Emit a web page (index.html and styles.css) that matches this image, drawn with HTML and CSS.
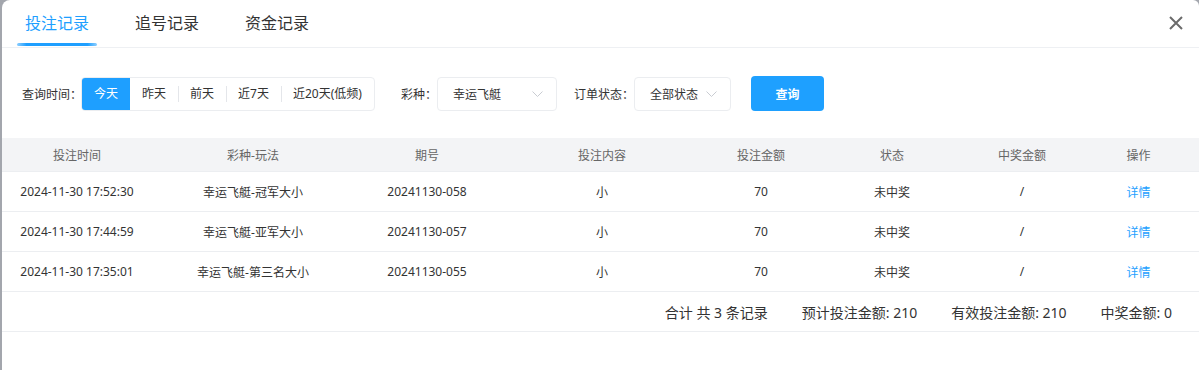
FILE: index.html
```html
<!DOCTYPE html>
<html lang="zh-CN">
<head>
<meta charset="utf-8">
<title>投注记录</title>
<link rel="stylesheet" href="styles.css">
</head>
<body>
<div class="modal">
  <div class="tabs-bar">
    <div class="tabs">
      <div class="tab active">投注记录</div>
      <div class="tab">追号记录</div>
      <div class="tab">资金记录</div>
    </div>
    <button class="close" aria-label="关闭">
      <svg width="14" height="14" viewBox="0 0 14 14"><path d="M1 1L13 13M13 1L1 13" stroke="#6b6b6b" stroke-width="2" fill="none"/></svg>
    </button>
  </div>

  <div class="filters">
    <span class="label">查询时间：</span>
    <div class="seg">
      <span class="seg-item active">今天</span>
      <span class="seg-item">昨天</span>
      <span class="seg-item">前天</span>
      <span class="seg-item">近7天</span>
      <span class="seg-item last">近20天(低频)</span>
    </div>
    <span class="label label-gap">彩种：</span>
    <div class="select select-lottery">
      <span>幸运飞艇</span>
      <svg class="chev" width="11" height="6" viewBox="0 0 11 6"><path d="M0.5 0.5L5.5 5.5L10.5 0.5" stroke="#c9ccd2" stroke-width="1" fill="none"/></svg>
    </div>
    <span class="label label-gap2">订单状态：</span>
    <div class="select select-status">
      <span>全部状态</span>
      <svg class="chev" width="11" height="6" viewBox="0 0 11 6"><path d="M0.5 0.5L5.5 5.5L10.5 0.5" stroke="#c9ccd2" stroke-width="1" fill="none"/></svg>
    </div>
    <button class="btn-query">查询</button>
  </div>

  <div class="table">
    <div class="row head">
      <div>投注时间</div><div>彩种-玩法</div><div>期号</div><div>投注内容</div><div>投注金额</div><div>状态</div><div>中奖金额</div><div>操作</div>
    </div>
    <div class="row">
      <div>2024-11-30 17:52:30</div><div>幸运飞艇-冠军大小</div><div>20241130-058</div><div>小</div><div>70</div><div>未中奖</div><div>/</div><div class="link">详情</div>
    </div>
    <div class="row">
      <div>2024-11-30 17:44:59</div><div>幸运飞艇-亚军大小</div><div>20241130-057</div><div>小</div><div>70</div><div>未中奖</div><div>/</div><div class="link">详情</div>
    </div>
    <div class="row">
      <div>2024-11-30 17:35:01</div><div>幸运飞艇-第三名大小</div><div>20241130-055</div><div>小</div><div>70</div><div>未中奖</div><div>/</div><div class="link">详情</div>
    </div>
    <div class="summary">
      <span>合计 共 3 条记录</span>
      <span>预计投注金额: 210</span>
      <span>有效投注金额: 210</span>
      <span>中奖金额: 0</span>
    </div>
  </div>
</div>
</body>
</html>
```
FILE: styles.css
```css
html, body {
  margin: 0;
  padding: 0;
  height: 100%;
}
body {
  background: #a3a6ad;
  font-family: "Noto Sans", "Noto Sans CJK SC", sans-serif;
  color: #333;
  overflow: hidden;
}
.modal {
  margin-left: 2px;
  height: 100%;
  background: #fff;
  border-top-left-radius: 8px;
  border-top-right-radius: 6px;
}
.tabs-bar {
  height: 47px;
  border-bottom: 1px solid #eef0f3;
  display: flex;
  align-items: stretch;
  justify-content: space-between;
}
.tabs {
  display: flex;
  gap: 30px;
  padding-left: 15px;
}
.tab {
  width: 80px;
  font-size: 16px;
  line-height: 46px;
  text-align: center;
  color: #333;
  position: relative;
}
.tab.active {
  color: #1e9fff;
}
.tab.active::after {
  content: "";
  position: absolute;
  left: 0;
  right: 0;
  top: 43px;
  height: 3px;
  border-radius: 2px;
  background: linear-gradient(90deg, #8fcfff 0%, #1e9fff 12%, #1e9fff 88%, #8fcfff 100%);
}
.close {
  border: 0;
  background: none;
  padding: 0;
  width: 14px;
  height: 14px;
  margin: 16px 16px 0 0;
  cursor: pointer;
  display: block;
}
.close svg { display: block; }

.filters {
  display: flex;
  align-items: center;
  margin-top: 28px;
  padding-left: 20px;
  height: 35px;
  font-size: 12px;
}
.label {
  color: #333;
  margin-right: -1px;
}
.label-gap { margin-left: 26px; margin-right: 0; }
.label-gap2 { margin-left: 17px; margin-right: 0; }
.seg {
  display: flex;
  align-items: center;
  height: 32px;
  border: 1px solid #ebedf0;
  border-radius: 4px;
  overflow: hidden;
}
.seg-item {
  height: 32px;
  line-height: 32px;
  padding: 0 12px;
  color: #333;
  position: relative;
}
.seg-item + .seg-item:not(:nth-child(2))::before {
  content: "";
  position: absolute;
  left: 0;
  top: 8px;
  width: 1px;
  height: 16px;
  background: #e4e6ea;
}
.seg-item.active {
  background: #1e9fff;
  color: #fff;
}
.select {
  border: 1px solid #ebedf0;
  border-radius: 4px;
  display: flex;
  align-items: center;
  justify-content: space-between;
  padding: 0 13px 0 15px;
  box-sizing: border-box;
  color: #333;
}
.select-lottery { width: 120px; height: 34px; }
.select-status { width: 97px; height: 34px; }
.chev { display: block; }
.btn-query {
  margin-left: 20px;
  width: 73px;
  height: 35px;
  border: 0;
  border-radius: 4px;
  background: #1ea0ff;
  color: #fff;
  font-family: inherit;
  font-size: 12px;
  font-weight: 700;
}

.table {
  margin-top: 27px;
  font-size: 12px;
}
.row {
  display: grid;
  grid-template-columns: 150px 202px 146px 204px 114px 148px 112px 121px;
  height: 40px;
  align-items: center;
  border-bottom: 1px solid #eceef1;
  box-sizing: border-box;
  text-align: center;
  color: #333;
}
.row.head {
  height: 34px;
  background: #f3f4f6;
  color: #666;
}
.link { color: #1e9fff; }
.summary {
  display: flex;
  justify-content: flex-end;
  align-items: center;
  gap: 34px;
  height: 40px;
  padding-right: 27px;
  border-bottom: 1px solid #eceef1;
  box-sizing: border-box;
  font-size: 14px;
  color: #333;
}
```
